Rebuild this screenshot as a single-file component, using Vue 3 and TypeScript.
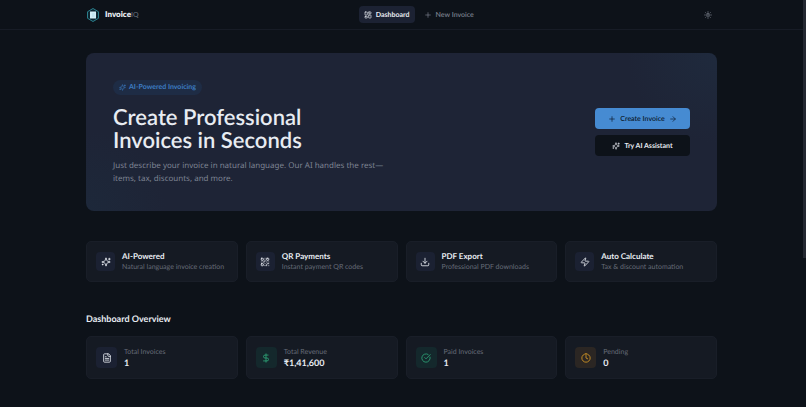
<script setup lang="ts">
import { h, type FunctionalComponent } from 'vue'

type IconName =
  | 'sparkles' | 'dashboard' | 'plus' | 'arrow' | 'qr' | 'download'
  | 'zap' | 'file' | 'dollar' | 'check' | 'clock' | 'sun'

const glyphs: Record<IconName, string> = {
  sparkles:
    'M9.937 15.5A2 2 0 0 0 8.5 14.063l-6.135-1.582a.5.5 0 0 1 0-.962L8.5 9.936A2 2 0 0 0 9.937 8.5l1.582-6.135a.5.5 0 0 1 .963 0L14.063 8.5A2 2 0 0 0 15.5 9.937l6.135 1.581a.5.5 0 0 1 0 .964L15.5 14.063a2 2 0 0 0-1.437 1.437l-1.582 6.135a.5.5 0 0 1-.963 0zM20 3v4M22 5h-4M4 17v2M5 18H3',
  dashboard:
    'M4 3h5a1 1 0 0 1 1 1v7a1 1 0 0 1-1 1H4a1 1 0 0 1-1-1V4a1 1 0 0 1 1-1zM15 3h5a1 1 0 0 1 1 1v3a1 1 0 0 1-1 1h-5a1 1 0 0 1-1-1V4a1 1 0 0 1 1-1zM15 12h5a1 1 0 0 1 1 1v7a1 1 0 0 1-1 1h-5a1 1 0 0 1-1-1v-7a1 1 0 0 1 1-1zM4 16h5a1 1 0 0 1 1 1v3a1 1 0 0 1-1 1H4a1 1 0 0 1-1-1v-3a1 1 0 0 1 1-1z',
  plus: 'M5 12h14M12 5v14',
  arrow: 'M5 12h14M12 5l7 7-7 7',
  qr: 'M4 3h3a1 1 0 0 1 1 1v3a1 1 0 0 1-1 1H4a1 1 0 0 1-1-1V4a1 1 0 0 1 1-1zM17 3h3a1 1 0 0 1 1 1v3a1 1 0 0 1-1 1h-3a1 1 0 0 1-1-1V4a1 1 0 0 1 1-1zM4 16h3a1 1 0 0 1 1 1v3a1 1 0 0 1-1 1H4a1 1 0 0 1-1-1v-3a1 1 0 0 1 1-1zM21 16h-3a2 2 0 0 0-2 2v3M21 21v.01M12 7v3a2 2 0 0 1-2 2H7M3 12h.01M12 3h.01M12 16v.01M16 12h1M21 12v.01M12 21v-1',
  download: 'M21 15v4a2 2 0 0 1-2 2H5a2 2 0 0 1-2-2v-4M7 10l5 5 5-5M12 15V3',
  zap: 'M4 14a1 1 0 0 1-.78-1.63l9.9-10.2a.5.5 0 0 1 .86.46l-1.92 6.02A1 1 0 0 0 13 10h7a1 1 0 0 1 .78 1.63l-9.9 10.2a.5.5 0 0 1-.86-.46l1.92-6.02A1 1 0 0 0 11 14z',
  file: 'M15 2H6a2 2 0 0 0-2 2v16a2 2 0 0 0 2 2h12a2 2 0 0 0 2-2V7zM14 2v4a2 2 0 0 0 2 2h4M10 9H8M16 13H8M16 17H8',
  dollar: 'M12 2v20M17 5H9.5a3.5 3.5 0 0 0 0 7h5a3.5 3.5 0 0 1 0 7H6',
  check: 'M21.801 10A10 10 0 1 1 17 3.335M9 11l3 3L22 4',
  clock: 'M12 2a10 10 0 1 0 0 20a10 10 0 1 0 0-20zM12 6v6l4 2',
  sun: 'M12 8a4 4 0 1 0 0 8a4 4 0 1 0 0-8zM12 2v2M12 20v2M4.93 4.93l1.41 1.41M17.66 17.66l1.41 1.41M2 12h2M20 12h2M6.34 17.66l-1.41 1.41M19.07 4.93l-1.41 1.41',
}

const Icon: FunctionalComponent<{ name: IconName; size: number }> = (props) =>
  h(
    'svg',
    {
      width: props.size,
      height: props.size,
      viewBox: '0 0 24 24',
      fill: 'none',
      stroke: 'currentColor',
      'stroke-width': 2,
      'stroke-linecap': 'round',
      'stroke-linejoin': 'round',
      'aria-hidden': 'true',
    },
    [h('path', { d: glyphs[props.name] })],
  )
Icon.props = ['name', 'size']

interface Feature { icon: IconName; title: string; text: string }
interface Stat { icon: IconName; label: string; value: string; tone: string }

const features: Feature[] = [
  { icon: 'sparkles', title: 'AI-Powered', text: 'Natural language invoice creation' },
  { icon: 'qr', title: 'QR Payments', text: 'Instant payment QR codes' },
  { icon: 'download', title: 'PDF Export', text: 'Professional PDF downloads' },
  { icon: 'zap', title: 'Auto Calculate', text: 'Tax & discount automation' },
]

const stats: Stat[] = [
  { icon: 'file', label: 'Total Invoices', value: '1', tone: 'neutral' },
  { icon: 'dollar', label: 'Total Revenue', value: '₹1,41,600', tone: 'green' },
  { icon: 'check', label: 'Paid Invoices', value: '1', tone: 'green' },
  { icon: 'clock', label: 'Pending', value: '0', tone: 'amber' },
]
</script>

<template>
  <div class="page">
    <header class="topbar">
      <div class="container bar">
        <a class="brand" href="#">
          <svg width="14" height="16" viewBox="0 0 28 32" aria-hidden="true">
            <path d="M14 3l11 6.500v13l-11 6.500-11-6.500v-13z" fill="#0d2530" stroke="#2b7f8c" stroke-width="2" stroke-linejoin="round" />
            <path d="M8 9h12v14H8z" fill="#d3eef6" />
            <path d="M12 14h5M12 18h5" stroke="#a9d4e6" stroke-width="1.6" />
          </svg>
          <span class="name">Invoice<small>IQ</small></span>
        </a>
        <nav class="nav">
          <a class="tab active" href="#"><Icon name="dashboard" :size="8" />Dashboard</a>
          <a class="tab" href="#"><Icon name="plus" :size="8" />New Invoice</a>
        </nav>
        <button class="theme" type="button" aria-label="Toggle theme"><Icon name="sun" :size="8" /></button>
      </div>
    </header>

    <main class="container content">
      <section class="hero">
        <div class="pitch">
          <span class="badge"><Icon name="sparkles" :size="7" />AI-Powered Invoicing</span>
          <h1>Create Professional<br />Invoices in Seconds</h1>
          <p>Just describe your invoice in natural language. Our AI handles the rest—items, tax, discounts, and more.</p>
        </div>
        <div class="actions">
          <button class="btn primary" type="button">
            <Icon name="plus" :size="8" />Create Invoice<Icon name="arrow" :size="8" />
          </button>
          <button class="btn dark" type="button"><Icon name="sparkles" :size="8" />Try AI Assistant</button>
        </div>
      </section>

      <section class="grid features">
        <article v-for="f in features" :key="f.title" class="card">
          <span class="tile"><Icon :name="f.icon" :size="10" /></span>
          <div>
            <h3>{{ f.title }}</h3>
            <p class="muted">{{ f.text }}</p>
          </div>
        </article>
      </section>

      <h2>Dashboard Overview</h2>
      <section class="grid">
        <article v-for="s in stats" :key="s.label" class="card stat">
          <span class="tile" :class="s.tone"><Icon :name="s.icon" :size="10" /></span>
          <div>
            <p class="muted">{{ s.label }}</p>
            <p class="value">{{ s.value }}</p>
          </div>
        </article>
      </section>
    </main>
    <div class="scroll-thumb"></div>
  </div>
</template>

<style>
body {
  background: #0d1219;
}
</style>

<style scoped>
.page {
  position: relative;
  min-height: 100vh;
  padding-right: 3px;
  box-sizing: border-box;
  background: #0d1219;
  color: #e8ecf2;
  font-family: Lato, 'Noto Sans', sans-serif;
  font-size: 7px;
  line-height: 10px;
  text-rendering: geometricPrecision;
}
.page * {
  box-sizing: border-box;
}
h1, h2, h3, p {
  margin: 0;
}
a {
  color: inherit;
  text-decoration: none;
}
button {
  border: 0;
  padding: 0;
  background: none;
  color: inherit;
  font: inherit;
  text-rendering: inherit;
}
svg {
  flex: none;
  display: block;
}
.container {
  width: 100%;
  max-width: 647px;
  margin: 0 auto;
  padding: 0 8px;
}
.topbar {
  border-bottom: 1px solid #171c26;
}
.bar {
  display: flex;
  justify-content: space-between;
  align-items: center;
  height: 29px;
}
.brand {
  display: flex;
  align-items: center;
  gap: 5px;
}
.name {
  font-size: 8px;
  font-weight: 800;
}
.name small {
  font-size: 7px;
  font-weight: 400;
  color: #6b7280;
}
.nav {
  display: flex;
  gap: 4px;
}
.tab {
  display: flex;
  align-items: center;
  gap: 4px;
  height: 17px;
  padding: 0 5px;
  border-radius: 4px;
  font-weight: 600;
  color: #7b818e;
}
.tab.active {
  background: #1c2233;
  color: #e8ecf2;
  font-weight: 700;
}
.theme {
  padding: 5px;
  color: #8b919d;
}
.content {
  padding-top: 23px;
  padding-bottom: 28px;
}
.hero {
  display: flex;
  align-items: center;
  justify-content: space-between;
  gap: 24px;
  min-height: 158px;
  padding: 26px 27px;
  border-radius: 8px;
  background:
    radial-gradient(circle at 100% 0, #1f2a3d 0, transparent 90px),
    radial-gradient(circle at 0 100%, #1d283a 0, transparent 80px),
    #1e2436;
}
.pitch {
  max-width: 280px;
}
.badge {
  display: inline-flex;
  align-items: center;
  gap: 3px;
  height: 15px;
  padding: 0 6px;
  border-radius: 8px;
  background: #1e2c45;
  color: #3d7cc2;
  font-weight: 700;
}
h1 {
  margin-top: 10px;
  font-size: 22px;
  line-height: 23px;
  font-weight: 600;
  white-space: nowrap;
}
.pitch p {
  margin-top: 8px;
  font-family: 'Noto Sans', sans-serif;
  font-size: 8px;
  line-height: 13px;
  color: #7d8392;
}
.actions {
  display: flex;
  flex-direction: column;
  gap: 6px;
  width: 95px;
}
.btn {
  display: flex;
  align-items: center;
  justify-content: center;
  gap: 4px;
  height: 21px;
  border-radius: 4px;
  font-weight: 600;
}
.primary {
  background: #468bd2;
  color: #0c1a2c;
}
.dark {
  background: #0d1219;
  font-weight: 700;
}
.grid {
  display: grid;
  grid-template-columns: repeat(4, 1fr);
  gap: 8px;
}
.features {
  margin-top: 30px;
}
.card {
  display: flex;
  align-items: center;
  gap: 7px;
  height: 41px;
  padding: 0 9px;
  border: 1px solid #191e28;
  border-radius: 5px;
  background: #151a23;
}
.tile {
  display: grid;
  place-items: center;
  flex: none;
  width: 19px;
  height: 19px;
  border-radius: 4px;
  background: #1b2132;
}
h3 {
  font-size: 8px;
  line-height: 11px;
  font-weight: 700;
}
.muted {
  color: #656b77;
}
h2 {
  margin: 30px 0 11px;
  font-size: 9px;
  line-height: 13px;
  font-weight: 700;
}
.stat {
  height: 43px;
}
.stat .tile {
  width: 21px;
  height: 21px;
}
.tile.green {
  background: #14282c;
  color: #2fa67a;
}
.tile.amber {
  background: #2b2623;
  color: #d89a25;
}
.value {
  font-size: 9px;
  line-height: 12px;
  font-weight: 700;
}
.scroll-thumb {
  position: absolute;
  top: 0;
  right: 0;
  width: 3px;
  height: 258px;
  background: #242831;
}
</style>
